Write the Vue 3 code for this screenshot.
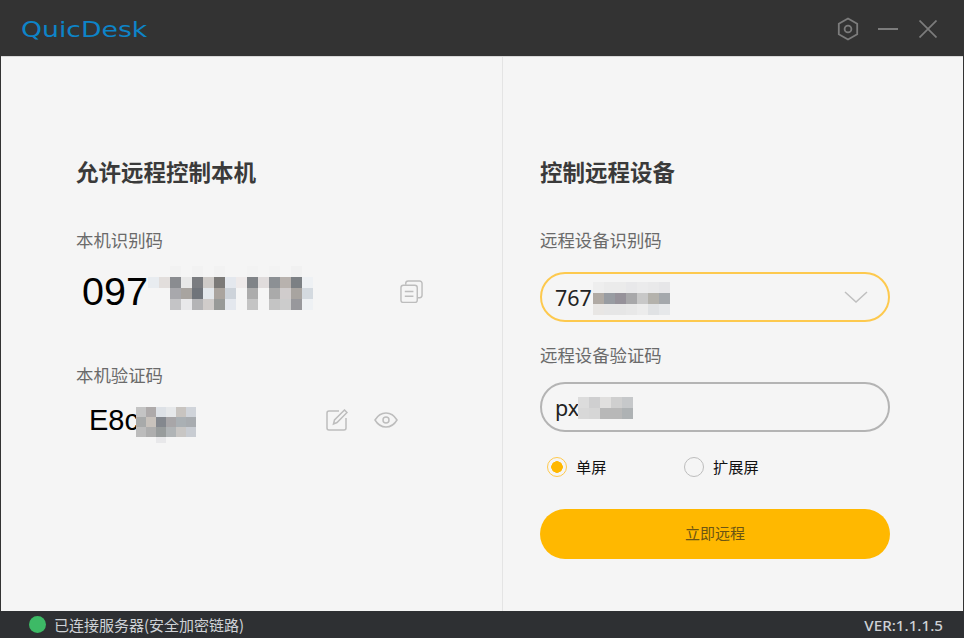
<script setup>
const T = 'transparent'
const idMosaic = [
  [T,T,'#f2f2f2',T,'#f2f2f2',T,'#f2f2f2',T,T,'#f3f3f3',T,'#f3f3f3',T,'#f1f1f1',T],
  ['#e8ecf0','#e2dedc','#8a8c90','#e8e8e8','#7a7c80','#cfcbc8','#7c7a78','#e4e8ee','#eeeaea','#808488','#e0dcdc','#8c9094','#b8b2ae','#7c8084','#eef1f4'],
  [T,T,'#a8a8ac','#a8a4a0','#70747a','#e4e8ec','#aaa49e','#cdd3da',T,'#acacac',T,'#aaaaaa','#d0cccc','#a8a4a0','#d4dae0'],
  [T,T,'#c4c4c6','#e8e8ea','#b4b4b6','#d0ccca','#989a98','#e4e8ee',T,'#c4c4c4',T,'#c4c4c4','#cccccc','#98989c','#eef1f4'],
].flat()
const codeMosaic = [
  ['#c4c4c4','#aeaaaa','#dde1e6','#e6e8ea','#c8c4c0','#d0d4da'],
  ['#a8aaaa','#c8c2bc','#84888e','#a8a6a8','#aab0b4','#a8acb0'],
  ['#bcbcbc','#aeaeae','#989c9c','#b0b4b6','#c8c6c4','#c8ccd2'],
].flat()
const remoteMosaic = [
  ['#eeeeee','#ebebeb','#ebebeb','#e8e8ea','#ebebec','#e9e9ea','#e6e6e8'],
  ['#b0aaa4','#989ca2','#96929a','#a8a8aa','#c8c8c8','#b4b2ac','#a4a8ac'],
  ['#e8e6e4','#e6e6e6','#e6e6e6','#e8e8e8','#ececec','#e0e2e4','#e6e8ea'],
].flat()
const passMosaic = [
  ['#dcdcdc','#cfcfd0','#e0dfde','#cfcfcf','#c6c8ca'],
  ['#d8d8d8','#d6d6d6','#b8b8b8','#b8b8b8','#aeb2b4'],
].flat()
</script>

<template>
  <div class="app">
    <header class="titlebar">
      <div class="logo">QuicDesk</div>
      <div class="win-actions">
        <svg class="ico-hex" viewBox="0 0 22 24" fill="none" stroke="#7c7c7c" stroke-width="1.8">
          <path d="M11 1.5 20.2 6.8V17.2L11 22.5 1.8 17.2V6.8Z" />
          <circle cx="11" cy="12" r="3.4" />
        </svg>
        <svg class="ico-min" viewBox="0 0 20 4" stroke="#7c7c7c" stroke-width="2">
          <path d="M0 2H20" />
        </svg>
        <svg class="ico-close" viewBox="0 0 18 18" fill="none" stroke="#7c7c7c" stroke-width="1.7">
          <path d="M.5.5 17.500 17.500M17.500.5.5 17.500" />
        </svg>
      </div>
    </header>

    <main class="main">
      <section class="col col-left">
        <h2 class="title">允许远程控制本机</h2>
        <div class="label label-first">本机识别码</div>
        <div class="id-row">
          <span class="id-num">097</span>
          <div class="mosaic m-id">
            <i v-for="(c, i) in idMosaic" :key="i" :style="{ background: c }"></i>
          </div>
          <svg class="ico-copy" viewBox="0 0 24 24" fill="none" stroke="#bdbdbd" stroke-width="1.5">
            <rect x="1" y="5.500" width="17" height="18" rx="2.500" />
            <path d="M6 5V3.500A2.500 2.500 0 0 1 8.500 1H20.500A2.500 2.500 0 0 1 23 3.500V16A2.500 2.500 0 0 1 20.500 18.500H18.500" />
            <path d="M5 12H14M5 17H14" />
          </svg>
        </div>
        <div class="label label-code">本机验证码</div>
        <div class="code-row">
          <span class="code-num">E8c</span>
          <div class="mosaic m-code">
            <i v-for="(c, i) in codeMosaic" :key="i" :style="{ background: c }"></i>
            <i class="m-tail"></i>
          </div>
          <svg class="ico-edit" viewBox="0 0 22 22" fill="none" stroke="#bdbdbd" stroke-width="1.5">
            <path d="M13 2H3A2 2 0 0 0 1 4V19A2 2 0 0 0 3 21H18A2 2 0 0 0 20 19V9" />
            <path d="M7.500 15 8.500 11 18.500 1 21 3.500 11 13.500Z" />
          </svg>
          <svg class="ico-eye" viewBox="0 0 24 16" fill="none" stroke="#bdbdbd" stroke-width="1.500">
            <path d="M1 8C4 3 8 1 12 1S20 3 23 8C20 13 16 15 12 15S4 13 1 8Z" />
            <circle cx="12" cy="8" r="3" />
          </svg>
        </div>
      </section>

      <section class="col col-right">
        <h2 class="title">控制远程设备</h2>
        <div class="label label-first">远程设备识别码</div>
        <div class="field field-active">
          <span class="field-text">767</span>
          <div class="mosaic m-remote">
            <i v-for="(c, i) in remoteMosaic" :key="i" :style="{ background: c }"></i>
          </div>
          <svg class="ico-chevron" viewBox="0 0 24 12" fill="none" stroke="#bfbfbf" stroke-width="1.500">
            <path d="M1 1 12 11 23 1" />
          </svg>
        </div>
        <div class="label label-pass">远程设备验证码</div>
        <div class="field field-pass">
          <span class="field-text">px</span>
          <div class="mosaic m-pass">
            <i v-for="(c, i) in passMosaic" :key="i" :style="{ background: c }"></i>
          </div>
        </div>
        <div class="radios">
          <label class="radio radio-single">
            <span class="dot dot-on"></span>
            <span class="radio-text">单屏</span>
          </label>
          <label class="radio">
            <span class="dot"></span>
            <span class="radio-text">扩展屏</span>
          </label>
        </div>
        <button class="connect">立即远程</button>
      </section>
    </main>

    <footer class="statusbar">
      <span class="status-dot"></span>
      <span class="status-text">已连接服务器(安全加密链路)</span>
      <span class="version">VER:1.1.1.5</span>
    </footer>
  </div>
</template>

<style>
html, body { margin: 0; padding: 0; background: #333; }
</style>

<style scoped>
.app {
  width: 964px;
  height: 638px;
  display: flex;
  flex-direction: column;
  background: #333;
  font-family: "Noto Sans CJK SC", "Noto Sans", sans-serif;
  overflow: hidden;
}
.titlebar {
  height: 56px;
  flex: none;
  display: flex;
  align-items: center;
  justify-content: space-between;
  background: #333;
  box-sizing: border-box;
  padding: 0 27px 0 21px;
}
.logo {
  font-family: "DejaVu Sans", sans-serif;
  font-size: 21px;
  line-height: 52px;
  margin-top: 4px;
  color: #0d84c8;
  transform: scaleX(1.27);
  transform-origin: left center;
}
.win-actions { display: flex; align-items: center; margin-top: 1px; }
.ico-hex { width: 22px; height: 24px; }
.ico-min { width: 20px; height: 4px; margin-left: 19px; }
.ico-close { width: 18px; height: 18px; margin-left: 21px; }

.main {
  flex: 1;
  min-height: 0;
  margin: 0 1px;
  background: #f5f5f5;
  display: grid;
  grid-template-columns: 502px 1fr;
  border-top: 1px solid #d8d8d8;
  box-sizing: border-box;
}
.col { box-sizing: border-box; padding-top: 98px; }
.col-left { padding-left: 75px; border-right: 1px solid #e4e4e4; }
.col-right { padding-left: 37px; }
.title {
  margin: 0;
  font-size: 22.500px;
  line-height: 32px;
  font-weight: 700;
  color: #3a3a3a;
}
.label {
  font-size: 17.400px;
  line-height: 24px;
  color: #6a6a6a;
}
.label-first { margin-top: 41px; }
.id-row {
  position: relative;
  width: 347px;
  height: 44px;
  margin-top: 17px;
  display: flex;
  align-items: center;
  justify-content: space-between;
}
.id-num {
  font-family: "Liberation Sans", sans-serif;
  font-size: 39.500px;
  line-height: 44px;
  color: #000;
  margin-left: 6px;
}
.ico-copy { width: 23px; height: 23px; }
.label-code { margin-top: 50px; }
.code-row {
  position: relative;
  width: 322px;
  height: 40px;
  margin-top: 13px;
  display: flex;
  align-items: center;
}
.code-num {
  font-family: "Liberation Sans", sans-serif;
  font-size: 29px;
  line-height: 40px;
  color: #000;
  margin-left: 13px;
}
.ico-edit { width: 22px; height: 22px; margin-left: auto; }
.ico-eye { width: 24px; height: 16px; margin-left: 26px; }

.mosaic { position: absolute; display: grid; pointer-events: none; }
.mosaic i { display: block; }
.m-id {
  left: 72px;
  top: -3px;
  grid-template-columns: repeat(15, 11px);
  grid-auto-rows: 11px;
}
.m-code {
  left: 60px;
  top: 7px;
  grid-template-columns: repeat(6, 10px);
  grid-auto-rows: 10px;
}
.m-tail { grid-column: 3; height: 6px; background: #e8e8ea; }
.m-remote {
  left: 51px;
  top: 8px;
  grid-template-columns: repeat(7, 11px);
  grid-auto-rows: 11px;
}
.m-pass {
  left: 36px;
  top: 13px;
  grid-template-columns: repeat(5, 11px);
  grid-auto-rows: 11px;
}

.field {
  position: relative;
  box-sizing: border-box;
  width: 350px;
  height: 50px;
  margin-top: 20px;
  border: 2px solid #b4b4b4;
  border-radius: 25px;
  display: flex;
  align-items: center;
  justify-content: space-between;
  padding: 0 20px 0 13px;
}
.field-active { border-color: #fdc94e; }
.field-pass { margin-top: 15px; }
.field-text {
  font-family: "Noto Sans", sans-serif;
  font-size: 21.500px;
  color: #222;
}
.ico-chevron { width: 24px; height: 12px; }
.label-pass { margin-top: 21px; }
.radios {
  display: flex;
  align-items: center;
  height: 24px;
  margin-top: 23px;
  padding-left: 7px;
}
.radio {
  display: flex;
  align-items: center;
  gap: 9px;
  font-size: 15.200px;
  font-weight: 400;
  color: #111;
}
.radio-text { padding-bottom: 2px; }
.radio-single { width: 137px; }
.dot {
  box-sizing: border-box;
  width: 20px;
  height: 20px;
  border: 1.500px solid #bdbdbd;
  border-radius: 50%;
  display: block;
}
.dot-on {
  border-color: #ffc94d;
  background: radial-gradient(circle, #ffb800 0 5.500px, transparent 6px);
}
.connect {
  display: block;
  width: 350px;
  height: 50px;
  margin-top: 30px;
  border: 0;
  border-radius: 25px;
  background: #ffb800;
  color: #6c5514;
  font-family: inherit;
  font-size: 15px;
  padding: 0 0 3px;
}
.statusbar {
  height: 27px;
  flex: none;
  display: flex;
  align-items: center;
  background: #2e3033;
  padding: 0 21px 0 29px;
  color: #cfd2d6;
  font-size: 15px;
}
.status-dot {
  width: 17px;
  height: 17px;
  border-radius: 50%;
  background: #3dba66;
  margin-right: 8px;
}
.version { margin-left: auto; font-family: "Noto Sans", sans-serif; font-size: 15.200px; font-weight: 500; }
</style>
